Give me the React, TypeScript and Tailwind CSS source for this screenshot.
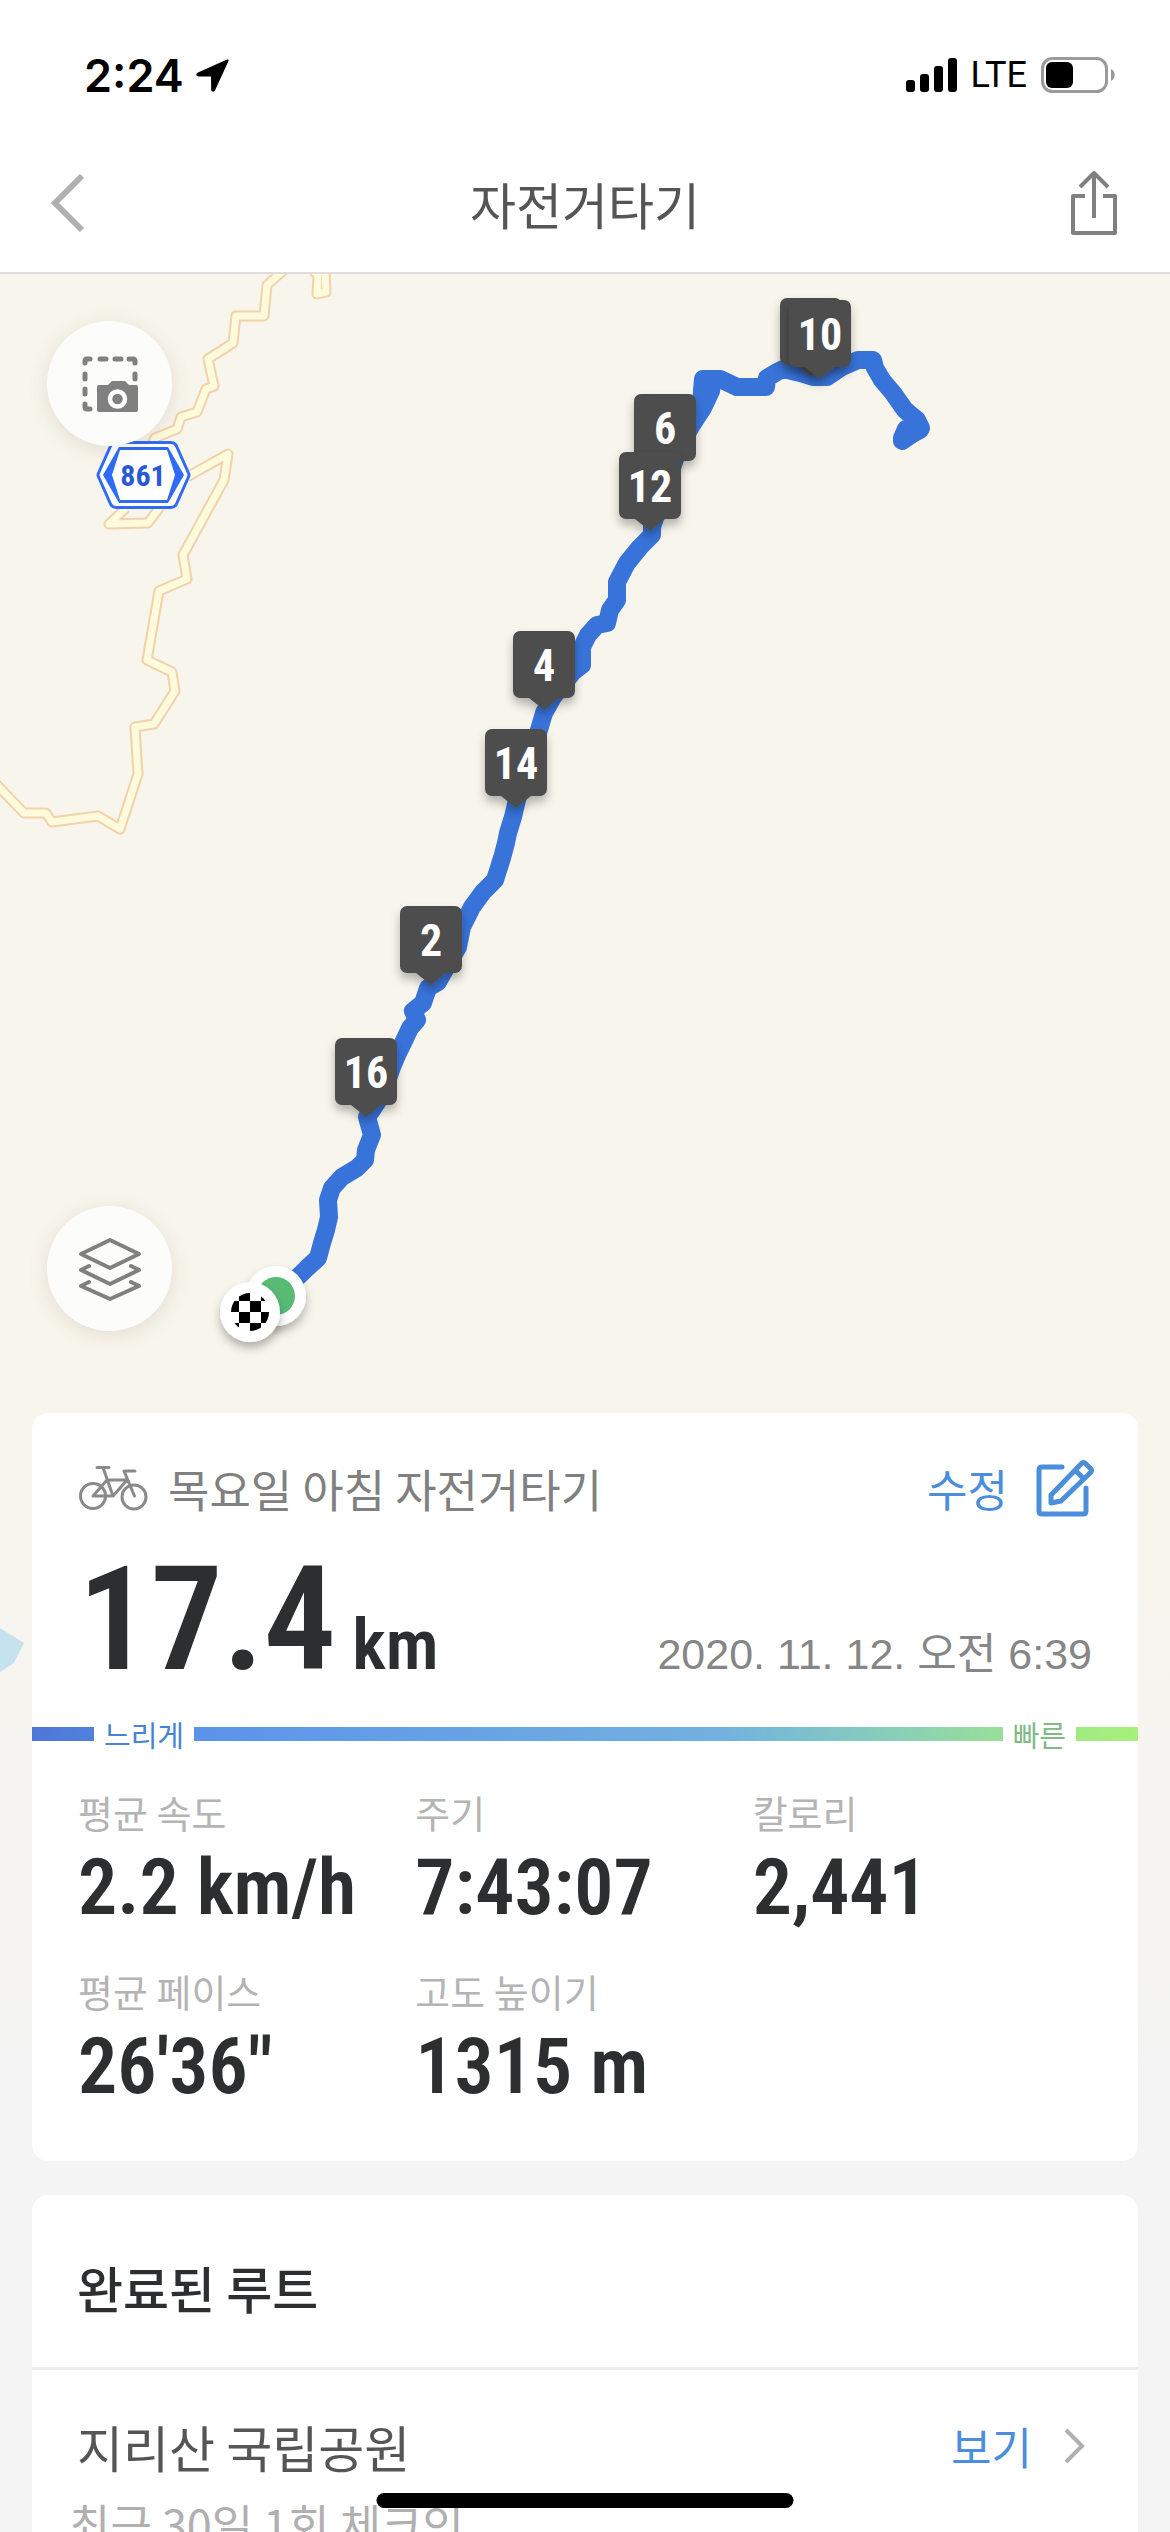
import React from "react";

const ROUTE =
  "M902 441 L921 428 L917 420 L905 410 L893 393 L882 380 L875 368 L873 360 L858 360 L842 367 L827 377 L813 377 L800 373 L783 369 L777 372 L767 378 L766 387 L760 387 L737 387 L720 379 L703 379 L702 390 L701 410 L690 428 L677 453 L652 527 L652 535 L640 547 L627 563 L617 582 L617 600 L610 610 L607 623 L597 625 L588 635 L582 647 L582 665 L573 672 L553 697 L544 713 L539 730 L527 767 L517 800 L513 817 L508 833 L506 843 L502 858 L495 880 L483 892 L472 907 L462 927 L458 947 L443 973 L438 982 L428 988 L423 1003 L413 1011 L417 1020 L410 1028 L403 1043 L398 1053 L392 1067 L383 1093 L372 1110 L367 1117 L372 1135 L366 1150 L365 1160 L357 1168 L342 1177 L332 1188 L328 1200 L329 1217 L326 1230 L322 1243 L318 1258 L307 1268 L302 1273 L277 1297";

const ROADS = [
  "M284 270 L267 285 L264 316 L236 316 L233 343 L208 359 L214 386 L206 389 L197 412 L181 417 L177 429 L155 438 L143 461",
  "M187 477 L228 454 L224 480 L183 555 L187 579 L159 591 L147 660 L172 672 L175 691 L154 724 L135 727 L138 774 L120 829 L98 816 L52 822 L46 813 L24 813 L-4 784",
  "M126 508 L109 524 L148 523 L160 507",
  "M310 268 L318 275 L317 294 L326 292 L325 268",
];

const PINS = [
  { x: 811, y: 298, label: "" },
  { x: 820, y: 300, label: "10" },
  { x: 665, y: 394, label: "6" },
  { x: 650, y: 452, label: "12" },
  { x: 544, y: 631, label: "4" },
  { x: 516, y: 729, label: "14" },
  { x: 431, y: 906, label: "2" },
  { x: 366, y: 1038, label: "16" },
];

const STATS = [
  { name: "평균 속도", value: "2.2 km/h" },
  { name: "주기", value: "7:43:07" },
  { name: "칼로리", value: "2,441" },
  { name: "평균 페이스", value: "26'36\"" },
  { name: "고도 높이기", value: "1315 m" },
];

function StatusBar() {
  return (
    <div className="flex h-[138px] items-center justify-between pt-3 pr-[55px] pl-[84px] text-black">
      <div className="flex items-center gap-3">
        <span className="font-['Inter'] text-[45px] leading-none font-semibold">2:24</span>
        <svg className="h-[33px] w-[33px]" viewBox="0 0 33 33" fill="currentColor" aria-hidden="true">
          <path d="M31 .6 2 13.600 C-.4 14.800 0 17.500 2.400 17.500 L15 17.600 15.200 30.500 C15.200 33 18 33.400 19.200 31 L32.400 2.300 C33 .8 32.300 0 31 .6Z" />
        </svg>
      </div>
      <div className="flex items-center gap-[14px]">
        <svg className="h-[35px] w-[51px]" viewBox="0 0 51 35" fill="currentColor" aria-hidden="true">
          <rect x="0" y="22" width="9" height="12" rx="3" />
          <rect x="14" y="16" width="9" height="18" rx="3" />
          <rect x="28" y="8" width="9" height="26" rx="3" />
          <rect x="42" y="0" width="9" height="34" rx="3" />
        </svg>
        <span className="font-['Roboto'] text-[36px] leading-none">LTE</span>
        <svg className="h-[36px] w-[74px]" viewBox="0 0 74 36" aria-hidden="true">
          <rect x="1.500" y="1.500" width="64" height="33" rx="10" fill="none" stroke="#9b9b9b" strokeWidth="3" />
          <rect x="5" y="5" width="27" height="26" rx="6" fill="#000" />
          <path d="M70 12c5 2 5 10 0 12z" fill="#9b9b9b" />
        </svg>
      </div>
    </div>
  );
}

function Header() {
  return (
    <header className="relative z-10 border-b-2 border-[#dedede] bg-white">
      <StatusBar />
      <div className="grid h-[134px] grid-cols-[1fr_auto_1fr] items-center px-[49px] pb-1">
        <button type="button" aria-label="뒤로" className="justify-self-start">
          <svg className="h-[58px] w-[36px]" viewBox="0 0 36 58" fill="none" stroke="#b0b0b0" strokeWidth="6" aria-hidden="true">
            <path d="M33 2 6 29l27 27" />
          </svg>
        </button>
        <h1 className="text-[50px] leading-none text-[#555555]">자전거타기</h1>
        <button type="button" aria-label="공유" className="mr-1 justify-self-end">
          <svg className="h-[66px] w-[46px]" viewBox="0 0 46 66" fill="none" stroke="#808080" strokeWidth="4" strokeLinejoin="round" aria-hidden="true">
            <path d="M14 26H2v37h42V26H32" />
            <path d="M23 48V4M9 17 23 3l14 14" />
          </svg>
        </button>
      </div>
    </header>
  );
}

function Pin({ x, y, label }: { x: number; y: number; label: string }) {
  return (
    <g transform={`translate(${x} ${y})`}>
      <path
        d="M-24 0H24a7 7 0 0 1 7 7V60a7 7 0 0 1-7 7H15L0 79-15 67H-24a7 7 0 0 1-7-7V7a7 7 0 0 1 7-7Z"
        fill="#4d4d4d"
        filter="url(#soft)"
      />
      <text
        x="0"
        y="50"
        textAnchor="middle"
        fill="#fff"
        className="font-['Roboto_Condensed'] text-[44px] font-bold"
      >
        {label}
      </text>
    </g>
  );
}

function MapCanvas() {
  return (
    <svg
      className="absolute inset-x-0 top-0 h-[1426px] w-full"
      viewBox="0 274 1170 1426"
      preserveAspectRatio="xMidYMin slice"
      role="img"
      aria-label="경로 지도"
    >
      <defs>
        <filter id="soft" x="-30%" y="-30%" width="160%" height="170%">
          <feDropShadow dx="0" dy="6" stdDeviation="5" floodColor="#000" floodOpacity="0.28" />
        </filter>
        <clipPath id="flag">
          <circle r="19" />
        </clipPath>
      </defs>
      <path d="M0 1628 24 1643 14 1663 0 1672Z" fill="#c5e2ee" />
      <g fill="none" strokeLinejoin="round">
        {ROADS.map((d) => (
          <path key={d} d={d} stroke="#f1d2ab" strokeWidth="11" />
        ))}
        {ROADS.map((d) => (
          <path key={d} d={d} stroke="#fdfbdc" strokeWidth="7" />
        ))}
      </g>
      <g strokeLinejoin="round">
        <path d="M116 442.500H171Q174 442.500 176 445L188 472Q190 475 188 478L176 505Q174 507.500 171 507.500H116Q113 507.500 111 505L99 478Q97 475 99 472L111 445Q113 442.500 116 442.500Z" fill="#fff" stroke="#2f6bf6" strokeWidth="3" />
        <path d="M119 447H168L184 475 168 503H119L103 475Z" fill="#2f6bf6" />
        <path d="M120 450H167L175 475 167 500H120L112 475Z" fill="#fff" />
        <text x="143" y="486" textAnchor="middle" fill="#285ad8" className="font-['Roboto_Condensed'] text-[30px] font-bold">
          861
        </text>
      </g>
      <g fill="none" stroke="#3873d9" strokeWidth="18" strokeLinejoin="round" strokeLinecap="round">
        <path d={ROUTE} />
        <path d="M902 438 L906 429 M712 382 L711 391 L703 408 L693 423 M917 422 L920 430 L910 435" />
      </g>
      {PINS.map((p) => (
        <Pin key={`${p.x}-${p.y}`} x={p.x} y={p.y} label={p.label} />
      ))}
      <g transform="translate(276 1296)">
        <circle r="30" fill="#fff" filter="url(#soft)" />
        <circle r="19" fill="#57bb74" />
      </g>
      <g transform="translate(250 1312)">
        <circle r="30" fill="#fff" filter="url(#soft)" />
        <g clipPath="url(#flag)">
          <path d="M-11-22H0V-11H-11ZM-22-11H-11V0H-22ZM0-11H11V0H0ZM11-22H22V-11H11ZM-11 0H0V11H-11ZM11 0H22V11H11ZM0 11H11V22H0ZM-22 11H-11V22H-22Z" fill="#000" />
        </g>
      </g>
    </svg>
  );
}

function MapButton({ label, children }: { label: string; children: React.ReactNode }) {
  return (
    <button
      type="button"
      aria-label={label}
      className="flex size-[125px] items-center justify-center rounded-full bg-[#fcfcfb] shadow-[0_4px_20px_rgba(90,70,40,0.13)]"
    >
      {children}
    </button>
  );
}

function CaptureIcon() {
  return (
    <svg className="h-[56px] w-[56px]" viewBox="0 0 56 56" aria-hidden="true">
      <g fill="none" stroke="#808080" strokeWidth="5" strokeLinecap="round">
        <path d="M3 7V5q0-2 2-2h3M18 3h6M33 3h6M47 3h4q2 0 2 2v2M3 18v5M53 18v5M3 33v5M3 48v3q0 2 2 2h3" />
      </g>
      <path d="M17 29h9l4-4h13l4 4h7q2 0 2 2v23q0 2-2 2H17q-2 0-2-2V31q0-2 2-2Z" fill="#808080" />
      <circle cx="35.500" cy="43" r="7.500" fill="#808080" stroke="#fff" strokeWidth="4.500" />
    </svg>
  );
}

function LayersIcon() {
  return (
    <svg className="h-[64px] w-[64px]" viewBox="0 0 64 64" fill="none" stroke="#808080" strokeWidth="4" strokeLinejoin="round" strokeLinecap="round" aria-hidden="true">
      <path d="M32 3 61 17 32 31 3 17Z" />
      <path d="M11 29 3 33 32 47 61 33 53 29" />
      <path d="M11 45 3 49 32 62 61 49 53 45" />
    </svg>
  );
}

function BikeIcon() {
  return (
    <svg className="h-[48px] w-[70px]" viewBox="10 12 70 48" fill="none" stroke="#8a8a8a" strokeWidth="3" strokeLinecap="round" strokeLinejoin="round" aria-hidden="true">
      <circle cx="25" cy="44" r="12.500" />
      <circle cx="66" cy="45" r="12" />
      <path d="M29 15.500H41M35 15.500 45 44H25L39 28H59L45 44M67 19H56L66.500 44" />
    </svg>
  );
}

function EditIcon() {
  return (
    <svg className="h-[58px] w-[60px]" viewBox="16 14 60 58" fill="none" stroke="#4a8edc" strokeWidth="5" strokeLinecap="round" strokeLinejoin="round" aria-hidden="true">
      <path d="M42 22H22q-3 0-3 3V66q0 3 3 3H63q3 0 3-3V43" />
      <path d="M31 58V50L62 18q1.500-1 3 0l6 6q1 1.500 0 3L41 56ZM56 26l7 7" />
    </svg>
  );
}

function SpeedScale() {
  return (
    <div className="flex h-[40px] items-center gap-[10px] text-[29px] leading-none">
      <span className="h-[14px] w-[62px] bg-linear-to-r from-[#4f77d8] to-[#5080dc]" />
      <span className="text-[#4583d6]">느리게</span>
      <span className="h-[14px] flex-1 bg-linear-to-r from-[#5b93ea] via-[#72b1e0] via-65% to-[#99df98]" />
      <span className="text-[#80ba86]">빠른</span>
      <span className="h-[14px] w-[62px] bg-linear-to-r from-[#a1ea82] to-[#a8f07a]" />
    </div>
  );
}

function SummaryCard() {
  return (
    <section className="rounded-[16px] bg-white pb-[54px]">
      <div className="flex h-[150px] items-center pr-[42px] pl-[46px]">
        <BikeIcon />
        <h2 className="ml-5 flex-1 text-[45px] leading-none text-[#808080]">목요일 아침 자전거타기</h2>
        <button type="button" className="flex items-center gap-7 text-[44px] leading-none text-[#4a8edc]">
          수정
          <EditIcon />
        </button>
      </div>
      <div className="mt-[2px] flex items-baseline justify-between pr-[46px] pl-[46px] leading-none">
        <p className="font-['Roboto_Condensed'] font-semibold text-[#2d2e30]">
          <span className="text-[144px] leading-[110px]">17.4</span>
          <span className="ml-4 text-[71px] leading-none">km</span>
        </p>
        <time className="font-['Liberation_Sans','Noto_Sans_CJK_KR',sans-serif] text-[43px] text-[#868686]">
          2020. 11. 12. 오전 6:39
        </time>
      </div>
      <div className="mt-[34px]">
        <SpeedScale />
      </div>
      <dl className="mt-[30px] grid grid-cols-3 gap-y-[35px] pr-[48px] pl-[46px]">
        {STATS.map((s) => (
          <div key={s.name} className="h-[144px] whitespace-nowrap">
            <dt className="text-[38px] leading-[56px] text-[#b4b4b4]">{s.name}</dt>
            <dd className="font-['Roboto_Condensed'] text-[78px] leading-[96px] font-semibold text-[#2d2e30]">{s.value}</dd>
          </div>
        ))}
      </dl>
    </section>
  );
}

function RoutesCard() {
  return (
    <section className="mt-[34px] rounded-[16px] bg-white">
      <h2 className="flex h-[172px] items-center px-[45px] pt-3 text-[50px] leading-none font-medium text-[#2d2e30]">
        완료된 루트
      </h2>
      <div className="border-t-[3px] border-[#eeeeee] pt-[40px] pr-[52px] pl-[45px]">
        <div className="flex items-center justify-between leading-none">
          <h3 className="text-[50px] leading-[72px] text-[#555555]">지리산 국립공원</h3>
          <a href="#route" className="flex items-center gap-[32px] text-[44px] text-[#4a8edc]">
            보기
            <svg className="h-[36px] w-[22px]" viewBox="0 0 22 36" fill="none" stroke="#b0b0b0" strokeWidth="4" aria-hidden="true">
              <path d="M2 2 18 18 2 34" />
            </svg>
          </a>
        </div>
        <p className="-ml-2 text-[45px] leading-[84px] text-[#b0b0b0]">최근 30일 1회 체크인</p>
      </div>
    </section>
  );
}

export default function App() {
  return (
    <div className="relative flex h-screen flex-col overflow-hidden bg-white font-['Noto_Sans_CJK_KR',sans-serif]">
      <Header />
      <main className="relative flex-1 overflow-hidden bg-linear-to-b from-[#f8f5ec] from-50% to-[#f4f4f4] to-80%">
        <MapCanvas />
        <div className="relative flex h-[1139px] flex-col items-start justify-between pt-[47px] pb-[82px] pl-[47px]">
          <MapButton label="지도 캡처">
            <CaptureIcon />
          </MapButton>
          <MapButton label="지도 레이어">
            <LayersIcon />
          </MapButton>
        </div>
        <div className="relative px-8">
          <SummaryCard />
          <RoutesCard />
        </div>
      </main>
      <div className="absolute bottom-6 left-1/2 z-20 h-[15px] w-[417px] -translate-x-1/2 rounded-full bg-black" />
    </div>
  );
}
